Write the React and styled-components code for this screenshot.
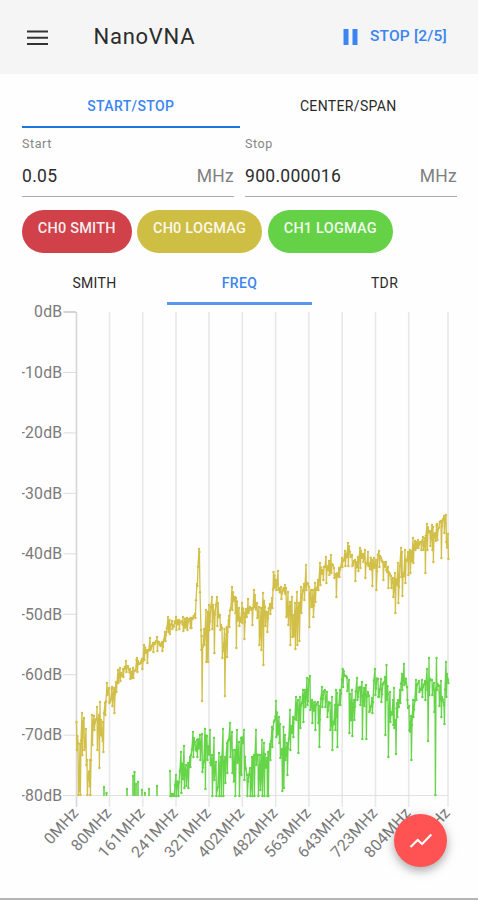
import React from "react";
import styled, { createGlobalStyle } from "styled-components";

// trace samples: x, highest y, lowest y
const gold = [
    [76.5,722,750],[78,743,795],[80,744,795],[82,713,755],[84,718,750],[86,729,765],[87,760,795],[90,760,795],[92,715,745],
    [94,716,730],[97,707,750],[99,715,768],[100,702,735],[103,722,752],[105,703,715],[107,683,695],[109,688,703],[112,687,706],
    [114,688,713],[116,682,692],[118,670,683],[120,668,681],[123,669,677],[126,661,672],[130,669,679],[133,668,678],
    [137,658,672],[142,659,669],[144,645,660],[147,650,663],[150,638,650],[153,643,652],[157,637,651],[162,642,651],
    [165,632,641],[168,617,632],[169.5,620,634],[172,621,629],[176,617,630],[179,620,629],[183,617,631],[187,618,630],
    [191,618,628],[195,614,618],[197,584,586],[199,549,552],[201,630,650],[201.7,636,701],[204,629,645],[206,610,662],
    [207.7,612,662],[209,605,630],[212,597,629],[214,612,653],[217,597,626],[220,615,630],[222,628,658],[224.5,629,696],
    [226.7,627,657],[229,616,627],[232,587,610],[235,597,613],[236,598,648],[239,608,626],[242,603,623],[244,613,639],
    [248,599,613],[252,608,625],[254,590,607],[257,603,618],[259,607,645],[261,608,650],[263,593,665],[265,607,626],
    [267,612,632],[270,604,614],[272,598,608],[273.5,572,588],[276,580,590],[278,571,590],[281,587,599],[285,585,594],
    [286,588,617],[288,592,625],[290,602,645],[292,597,637],[295,603,649],[297,592,645],[299,603,641],[301,587,613],
    [304,584,600],[306,565,590],[309,587,627],[311,590,607],[313,590,617],[315,583,602],[318,580,590],[320,563,585],
    [323,570,580],[326,557,583],[329,561,575],[331,555,573],[334,568,578],[336,574,597],[339,568,577],[342,558,567],
    [345,551,566],[348,543,566],[352,555,566],[355,560,581],[358,557,571],[360,548,568],[363,554,562],[365,550,578],
    [368,552,566],[372,560,586],[374,558,568],[376,560,590],[379,551,567],[383,562,580],[386,562,570],[388,567,588],
    [391,576,588],[393,578,597],[395,573,613],[398,563,603],[401,548,577],[402,552,596],[405,550,583],[408,552,575],
    [410,550,573],[413,538,563],[415,541,550],[418,540,548],[421,542,550],[423,537,550],[425,538,573],[427,524,550],
    [430,531,546],[432,525,550],[433,527,562],[437,524,540],[441,521,558],[444,516,533],[446,515,542],[448,534,559],
];

const green = [
    [170,771,796],[171,794,796],[174,794,796],[176,775,796],[178,782,796],[181,752,793],[184,746,788],[186,765,786],
    [188,763,788],[190,757,767],[193,732,757],[197,740,757],[200,735,760],[202,734,772],[205,729,789],[207,736,760],
    [210,730,763],[212,755,796],[214,738,780],[216,762,796],[219,753,796],[221,757,796],[223,729,796],[225,757,783],
    [227,743,773],[230,723,757],[232,732,773],[235,750,796],[237,730,763],[239,742,796],[241,738,775],[244,730,780],
    [247,775,796],[250,768,796],[252,757,796],[254,755,796],[256,730,765],[258,755,796],[260,755,790],[262,740,796],
    [264,743,796],[267,758,796],[268,752,796],[270,744,760],[272,727,747],[276,701,737],[279,717,743],[280,724,758],
    [282,749,791],[283.5,727,788],[285,735,760],[287,743,775],[290,710,750],[293,717,737],[296,697,720],[298,700,753],
    [300,697,728],[303,690,722],[305,690,707],[307,678,705],[310,676,710],[312,700,723],[315,702,730],[318,702,723],
    [319,706,747],[322,687,707],[325,690,707],[327,692,717],[330,703,730],[332,697,750],[335,705,730],[336,690,717],
    [337,693,747],[340,690,705],[342.7,669,687],[347,678,691],[349,680,733],[352,690,736],[354,700,720],[357,678,700],
    [360,687,705],[362,682,739],[364,688,706],[366,685,739],[369,696,712],[372,698,713],[375,669,695],[378,679,697],
    [381,679,702],[385,677,735],[386.5,665,700],[388,694,757],[390,692,722],[393,700,725],[394,688,728],[395.6,720,754],
    [397,703,717],[400,690,703],[402,674,690],[404,664,685],[407,687,700],[409,706,730],[411,716,760],[413,700,717],
    [416,680,700],[419,681,692],[422,680,697],[425,681,700],[427,669,690],[427.7,682,741],[429,658,695],[432,680,695],
    [434,683,712],[435,690,795],[436.5,658,690],[439,686,706],[441,681,717],[444,705,724],[446,662,697],[448,680,683],
];

// short bursts that only just clear the -80dB floor
const bursts = [
    [104,787],[106.5,793],[127,789],[133,776],[134.5,772],[136,784],[138,782],[142,790],[145,793],[149,789],[157,786],
];

const freqTicks = [
    [76.5, "0MHz"],[109.5, "80MHz"],[142.7, "161MHz"],[176, "241MHz"],[209, "321MHz"],[242.3, "402MHz"],
    [275.6, "482MHz"],[308.9, "563MHz"],[342.2, "643MHz"],[375.5, "723MHz"],[408.7, "804MHz"],[448, "900MHz"],
];
const levels = [0, -10, -20, -30, -40, -50, -60, -70, -80];

// fill the gaps between samples with a steady jitter
const buildTrace = (samples) => {
    const points = [];
    let seed = 7;
    const random = () => {
        seed = (seed * 16807) % 2147483647;
        return seed / 2147483647;
    };
    samples.forEach(([x, top, bottom], i) => {
        points.push([x, top], [x + 0.4, bottom]);
        const next = samples[i + 1];
        if(!next) return;
        const span = Math.min(bottom - top, next[2] - next[1]);
        for(let px = x + 1; px < next[0] - 0.3; px += 0.85){
            const t = (px - x) / (next[0] - x);
            points.push([px, top + (next[1] - top) * t + random() * span]);
        }
    });
    return points;
};

const Trace = ({samples, color}) => {
    const points = buildTrace(samples);
    return(
        <g fill={color}>
            <polyline points={points.map((p) => p.join(",")).join(" ")} fill="none" stroke={color} strokeWidth="1.3" strokeLinejoin="round" />
            {points.map(([x, y], i) => (
                <circle key={i} cx={x} cy={y} r="1.2" />
            ))}
        </g>
    )
}

const FreqChart = () => {
    return(
        <Chart viewBox="22 305 435 573">
            {freqTicks.map(([x]) => (
                <line key={x} x1={x} x2={x} y1="312" y2="807" stroke={x < 80 ? "#d6d6d6" : "#e8e8e8"} strokeWidth="1.6" />
            ))}
            <line x1="63" x2="448" y1="795.5" y2="795.5" stroke="#e2e2e2" />
            {levels.map((level, i) => (
                <g key={level}>
                    <line x1="63.5" x2="76" y1={312 + i * 60.45} y2={312 + i * 60.45} stroke={i ? "#dcdcdc" : "#aaa"} />
                    <AxisText x="62.3" y={317.3 + i * 60.45}>{`${level}dB`}</AxisText>
                </g>
            ))}
            {freqTicks.map(([x, label]) => (
                <AxisText key={label} transform={`translate(${x + 3} 813.5) rotate(-48)`}>{label}</AxisText>
            ))}
            <Trace samples={gold} color="#d2bf48" />
            {bursts.map(([x, y]) => (
                <g key={x} fill="#66d449">
                    <rect x={x - 0.8} y={y} width="1.6" height={796 - y} />
                    <circle cx={x} cy={y} r="1.2" />
                </g>
            ))}
            <Trace samples={green} color="#66d449" />
        </Chart>
    )
}

const App = () => {
    return(
        <>
            <GlobalStyle />
            <Screen>
                <Toolbar>
                    <MenuIcon viewBox="0 0 22 16">
                        <path d="M0 1.5h21M0 7.7h21M0 14h21" stroke="#333" strokeWidth="1.9" />
                    </MenuIcon>
                    <Title>NanoVNA</Title>
                    <StopButton>
                        <svg width="15" height="16" viewBox="0 0 15 16" fill="#3b85f0">
                            <path d="M0.5 0h5v16h-5zM9.5 0h5v16h-5z" />
                        </svg>
                        <span>STOP [2/5]</span>
                    </StopButton>
                </Toolbar>
                <Content>
                    <Tabs>
                        <Tab $active>START/STOP</Tab>
                        <Tab>CENTER/SPAN</Tab>
                    </Tabs>
                    <Fields>
                        <Field>
                            <label>Start</label>
                            <Value>0.05<span>MHz</span></Value>
                        </Field>
                        <Field>
                            <label>Stop</label>
                            <Value>900.000016<span>MHz</span></Value>
                        </Field>
                    </Fields>
                    <Chips>
                        <Chip $color="#d0414a" $width={109.5}>CH0 SMITH</Chip>
                        <Chip $color="#cfbe44" $width={125}>CH0 LOGMAG</Chip>
                        <Chip $color="#65d147" $width={125.5}>CH1 LOGMAG</Chip>
                    </Chips>
                    <Tabs $small>
                        <Tab $small>SMITH</Tab>
                        <Tab $small $active>FREQ</Tab>
                        <Tab $small>TDR</Tab>
                    </Tabs>
                    <FreqChart />
                </Content>
                <Fab>
                    <svg width="24" height="24" viewBox="0 0 24 24" fill="none" stroke="#fff" strokeWidth="2.1">
                        <path d="M1.5 18l7.2-7.1 4.4 4.1 9.2-9.5" />
                    </svg>
                </Fab>
            </Screen>
        </>
    )
}

const GlobalStyle = createGlobalStyle`
    *{
        box-sizing: border-box;
    }
    body{
        margin: 0;
        background: #fefefe;
        font-family: Roboto, "Liberation Sans", sans-serif;
        color: #2c2c2c;
    }
`
const Screen = styled.div`
    position: relative;
    width: 478px;
    height: 900px;
    overflow: hidden;
    border-bottom: 2px solid #b5b5b5;
`
const Toolbar = styled.header`
    display: flex;
    align-items: center;
    height: 74px;
    padding: 0 31px 0 27px;
    background: #f5f5f5;
`
const MenuIcon = styled.svg`
    width: 22px;
    height: 16px;
    margin-top: 1px;
`
const Title = styled.h1`
    margin: -1px auto 0 44.5px;
    font-size: 22px;
    font-weight: 400;
    letter-spacing: 0.75px;
`
const StopButton = styled.div`
    display: flex;
    align-items: center;
    gap: 12px;
    color: #3b85f0;
    font-size: 15.5px;
    font-weight: 500;
    letter-spacing: 0.2px;
    span{
        margin-top: -3px;
    }
`
const Content = styled.main`
    padding: 10px 21px 0 22px;
`
const Tabs = styled.nav`
    display: flex;
    height: ${({$small}) => ($small ? "42px" : "43.5px")};
    margin-top: ${({$small}) => ($small ? "10.5px" : "0")};
`
const Tab = styled.div`
    flex: 1;
    padding-top: ${({$small}) => ($small ? "12px" : "14px")};
    text-align: center;
    font-size: 14px;
    line-height: 17px;
    font-weight: ${({$active}) => ($active ? 500 : 400)};
    letter-spacing: 0.35px;
    color: ${({$active}) => ($active ? "#3b85f0" : "#2a2a2a")};
    border-bottom: ${({$active, $small}) => ($active ? `${$small ? 3 : 2.5}px solid ${$small ? "#5a96ee" : "#1c77dd"}` : "none")};
`
const Fields = styled.div`
    display: grid;
    grid-template-columns: 1fr 1fr;
    gap: 11px;
`
const Field = styled.div`
    height: 69.5px;
    padding-top: 8px;
    border-bottom: 1.5px solid #aaa;
    label{
        display: block;
        font-size: 12.5px;
        line-height: 15px;
        letter-spacing: 0.6px;
        color: #858585;
    }
`
const Value = styled.div`
    display: flex;
    justify-content: space-between;
    margin-top: 13px;
    font-size: 17.5px;
    line-height: 24px;
    letter-spacing: 0.3px;
    span{
        color: #808080;
    }
`
const Chips = styled.div`
    display: flex;
    gap: 5.5px;
    margin-top: 13px;
`
const Chip = styled.div`
    width: ${({$width}) => $width}px;
    height: 42.5px;
    padding-top: 9px;
    border-radius: 22px;
    background: ${({$color}) => $color};
    color: rgba(255,255,255,0.92);
    text-align: center;
    font-size: 14.5px;
    font-weight: 500;
    line-height: 19px;
    letter-spacing: 0.2px;
`
const Chart = styled.svg`
    display: block;
    width: 435px;
    height: 573px;
    overflow: visible;
    clip-path: inset(-8px 0 0 0);
`
const AxisText = styled.text`
    font-size: 15.8px;
    letter-spacing: 0.2px;
    text-anchor: end;
    fill: #7a7a7a;
`
const Fab = styled.div`
    position: absolute;
    right: 31px;
    bottom: 31px;
    display: flex;
    align-items: center;
    justify-content: center;
    width: 53px;
    height: 53px;
    border-radius: 50%;
    background: #ff5252;
    box-shadow: 0 4px 8px rgba(0,0,0,0.28), 0 2px 18px rgba(0,0,0,0.08);
`

export default App;
